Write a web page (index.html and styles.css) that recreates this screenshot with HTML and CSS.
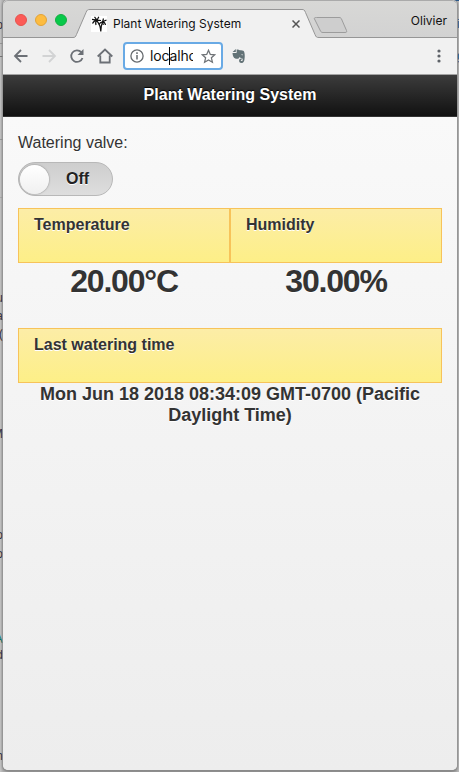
FILE: index.html
```html
<!DOCTYPE html>
<html lang="en">
<head>
<meta charset="utf-8">
<title>Plant Watering System</title>
<link rel="stylesheet" href="styles.css">
</head>
<body>
<div class="backdrop">
  <span class="frag t1">p</span><span class="frag t2">u</span><span class="frag t3">a</span><span class="frag t4">(</span><span class="frag t5">M</span><span class="frag t6">o</span><span class="frag t7">o</span><span class="frag t8">A</span><span class="frag t9">d</span><span class="frag t10">h</span>
  <span class="frag r1">i</span><span class="frag r2">g</span>
</div>
<div class="window">
  <div class="tabstrip">
    <svg class="tabshape" width="454" height="38" viewBox="3 0 454 38">
      <path d="M3 37.5H73C75 37.5 75.500 37 76.500 34.500L86 12.500C87 10 87.500 9.500 90 9.500H302C304 9.500 304.500 10 305.500 12.500L315 34.500C316 37 316.500 37.500 319 37.500H457V39H3Z" fill="#f1f1f1" stroke="#969696"/>
      <path d="M316.500 17.500H339C340.500 17.500 341 18 341.500 19L346.500 30.500C347 32 346.500 32.500 345 32.500H323C321.500 32.500 321 32 320.500 31L314.500 19C314 18 314.500 17.500 316.500 17.500Z" fill="#cecece" stroke="#9c9c9c"/>
    </svg>
    <div class="lights"><i class="red"></i><i class="amber"></i><i class="green"></i></div>
    <svg class="palm" width="16" height="16" viewBox="0 0 16 16">
      <path fill="#fff" d="M0 0h16v16H0z"/>
      <path fill="none" stroke="#111" stroke-width="1.200" d="M5.500 4.500C8 7 9.500 10 9.800 15.500M11.500 6C10.200 9 9.800 12 9.800 15.500"/>
      <path fill="none" stroke="#111" stroke-width="1.200" d="M6 4.200L1 3.300M6 4.200Q3 4.500 1.500 7.500M6 4.200Q4 6 5 9M6 4.200L3.500.8M6 4.200L7.800.8M6 4.200L10 4.500M11.500 5.800L15.500 4M11.500 5.800Q14 6 14.500 9M11.500 5.800Q9 6 8 8.500M11.500 5.800L12.500 2.500M11.500 5.800L12.300 9"/>
    </svg>
    <span class="tabtitle">Plant Watering System</span>
    <svg class="close" width="8" height="8" viewBox="0 0 8 8"><path d="M.5.5l7 7M7.500.5l-7 7" stroke="#555" stroke-width="1.500"/></svg>
    <span class="profile">Olivier</span>
  </div>
  <div class="toolbar">
    <svg class="nav" width="110" height="36" viewBox="10 38 110 36" fill="none" stroke="#6c7076" stroke-width="1.800">
      <path d="M27.500 56H15.500M21 50l-6 6 6 6"/>
      <path d="M42.500 56H54.500M49 50l6 6-6 6" stroke="#d2d3d4"/>
      <path d="M81.300 52.200A5.800 5.800 0 1 0 82.500 58"/><path d="M83.500 49v6h-6z" fill="#6c7076" stroke="none"/>
      <path d="M97.700 56.500L105 49.600l7.300 6.900M100.300 55.500v7h9.400v-7"/>
    </svg>
    <div class="address">
      <svg width="14" height="14" viewBox="0 0 14 14" fill="none" stroke="#666a6e"><circle cx="7" cy="7" r="6.100" stroke-width="1.300"/><path d="M7 6v4.500M7 3.300v1.600" stroke-width="1.500"/></svg>
      <span class="url">localhost</span><i class="caret"></i>
      <svg class="star" width="15" height="15" viewBox="0 0 15 15"><path d="M7.500 1.300L9.300 5.400l4.400.4-3.300 3 1 4.400-3.900-2.300-3.900 2.300 1-4.400-3.300-3 4.400-.4z" fill="none" stroke="#707478" stroke-width="1.300"/></svg>
    </div>
    <svg class="elephant" width="14" height="15" viewBox="0 0 14 15">
      <path fill="#627276" d="M3.800 0V3H.6zM4.600.5C6 .2 7 .6 7.700 1.200c1.800.1 3.700.3 4.200 1 .9 1.500 1.100 5.200.6 8-.3 2-.8 3.700-2.900 3.700-2.100 0-2.500-1-2.500-2.400 0-1.300 1.100-2.100 2.500-1.900v1.300c-1.100 0-1.100 1.200-.1 1.200 1.300 0 1.500-1.600.9-2.700-1.300-.2-2.200-.6-2.700-1.400C7 9.400 6 10 4.800 9.800 2 9.500.9 8 .5 4h3.600c.5 0 .6-.3.6-.8z"/>
      <path d="M9.200 6c.3-1.200 1.600-1.100 1.800.2z" fill="#f1f1f1"/>
    </svg>
    <svg class="menu" width="4" height="14" viewBox="0 0 4 14" fill="#5e6268"><circle cx="2" cy="2" r="1.600"/><circle cx="2" cy="7" r="1.600"/><circle cx="2" cy="12" r="1.600"/></svg>
  </div>
  <main class="page">
    <header class="header"><h1>Plant Watering System</h1></header>
    <section class="content">
      <label class="label"><span>Watering valve:</span></label>
      <div class="switch"><i class="knob"></i><b>Off</b></div>
      <div class="grid">
        <div class="cell"><div class="bar"><span>Temperature</span></div><div class="value">20.00°C</div></div>
        <div class="cell"><div class="bar"><span>Humidity</span></div><div class="value">30.00%</div></div>
      </div>
      <div class="bar"><span>Last watering time</span></div>
      <div class="time">Mon Jun 18 2018 08:34:09 GMT-0700 (Pacific<br>Daylight Time)</div>
    </section>
  </main>
</div>
</body>
</html>
```
FILE: styles.css
```css
* { box-sizing: border-box; }
body {
  margin: 0;
  width: 459px;
  height: 772px;
  overflow: hidden;
  position: relative;
  background: #bcbcbc;
  font-family: "Liberation Sans", Arial, sans-serif;
  color: #333;
}
/* slivers of the document lying behind the window */
.backdrop {
  position: absolute;
  inset: 0;
  background:
    linear-gradient(#999, #999) 0 43px / 3px 1px no-repeat,
    linear-gradient(#777, #777) 0 56px / 3px 1px no-repeat,
    linear-gradient(#999, #999) 0 139px / 3px 1px no-repeat,
    linear-gradient(#aaa, #aaa) 0 197px / 3px 1px no-repeat,
    linear-gradient(#26578c, #26578c) 448px 0 / 11px 1px no-repeat,
    linear-gradient(90deg, #c6c6c6, #b0b0b0 3px, #aaa 456px, #bcbcbc 459px);
}
.frag { position: absolute; right: 456px; font-size: 13px; line-height: 14px; color: #334; }
.t1 { top: 18px; } .t2 { top: 291px; } .t3 { top: 309px; } .t4 { top: 327px; }
.t5 { top: 427px; } .t6 { top: 528px; } .t7 { top: 547px; }
.t8 { top: 632px; color: #087568; } .t9 { top: 648px; } .t10 { top: 749px; }
.r1, .r2 { right: auto; left: 457px; color: #245f91; }
.r1 { top: 17px; } .r2 { top: 49px; }
.backdrop::after {
  content: "";
  position: absolute;
  left: 3px;
  top: 0;
  width: 454px;
  height: 770px;
  border-radius: 5px;
  box-shadow: 0 0 0 1px #9999, 0 1px 3px #555;
}
.window {
  position: relative;
  margin-left: 3px;
  width: 454px;
  height: 770px;
  border-radius: 5px;
  overflow: hidden;
  background: #f1f1f1;
}
.window::after { content: ""; position: absolute; inset: 0; border-radius: 5px; box-shadow: inset 0 1px #aaa; pointer-events: none; }
.tabstrip {
  position: relative;
  display: flex;
  height: 38px;
  background: linear-gradient(#d8d8d6, #d2d2d2);
  font-family: "Inter", sans-serif;
  font-size: 12px;
  line-height: 16px;
  color: #111;
}
.tabstrip > * { position: relative; flex: none; }
.tabstrip .tabshape { position: absolute; left: 0; top: 0; }
.lights { display: flex; gap: 8px; margin: 14px 0 0 12px; width: 76px; }
.lights i { width: 12px; height: 12px; border-radius: 50%; }
.red { background: #fc5b57; border: 1px solid #e6534d; }
.amber { background: #fdbc40; border: 1px solid #e2a337; }
.green { background: #07c94a; border: 1px solid #16ad42; }
.palm { margin-top: 16px; }
.tabtitle { margin: 16px 0 0 6px; width: 179px; white-space: nowrap; letter-spacing: .01px; }
.close { margin-top: 20px; }
.profile { margin: 13px 10px 0 auto; }
.toolbar { display: flex; height: 37px; border-bottom: 1px solid #a3a3a3; background: #f1f1f1; }
.toolbar > * { flex: none; }
.nav { margin-left: 7px; }
.address {
  display: flex;
  align-items: center;
  margin: 4px 0 0 3px;
  width: 100px;
  height: 28px;
  padding: 0 5px;
  background: #fff;
  border: 2px solid #69aae5;
  border-radius: 4px;
  position: relative;
}
.url { margin-left: 6px; width: 43px; overflow: hidden; white-space: nowrap; font: 14px/20px Inter, sans-serif; color: #111; letter-spacing: -.15px; }
.caret { position: absolute; left: 44px; top: 3px; width: 1px; height: 18px; background: #000; }
.star { margin-left: 8px; flex: none; }
.elephant { margin: 11px 0 0 9px; }
.menu { margin: 11px 16px 0 auto; }
.page { height: 695px; background: linear-gradient(#f9f9f9 42px, #ededed); }
.header {
  height: 42px;
  border-bottom: 1px solid #333;
  background: linear-gradient(#3c3c3c, #111);
  text-align: center;
}
.header h1 { margin: 0; font-size: 16px; line-height: 40px; color: #fff; text-shadow: 0 -1px 1px #000; }
.content { padding: 15px; }
.label { display: block; font-size: 16px; line-height: 21px; text-shadow: 0 1px #fff; }
.switch {
  display: flex;
  align-items: center;
  margin-top: 9px;
  width: 95px;
  height: 34px;
  padding-left: 1px;
  border: 1px solid #b8b8b8;
  border-radius: 17px;
  background: linear-gradient(#cecece, #dedede);
}
.switch b { margin-left: 17px; font-size: 16px; color: #222; text-shadow: 0 1px #fff; }
.knob { width: 29px; height: 29px; border-radius: 50%; background: linear-gradient(#fff, #f0f0f0); box-shadow: 0 0 2px #777; }
.grid { display: grid; grid-template-columns: 1fr 1fr; margin-top: 12px; }
.bar {
  height: 55px;
  padding: 6px 15px;
  border: 1px solid #f7c35a;
  background: linear-gradient(#fceda7, #fdef87);
  font-size: 16px;
  font-weight: bold;
  line-height: 20px;
  text-shadow: 0 1px #fff;
}
.value { height: 65px; text-align: center; font-weight: bold; font-size: 32px; line-height: 37px; letter-spacing: -1.2px; text-shadow: 0 1px #fff; }
.time { padding-top: 1px; text-align: center; font-weight: bold; font-size: 18px; line-height: 21px; text-shadow: 0 1px #fff; white-space: nowrap; }
```
